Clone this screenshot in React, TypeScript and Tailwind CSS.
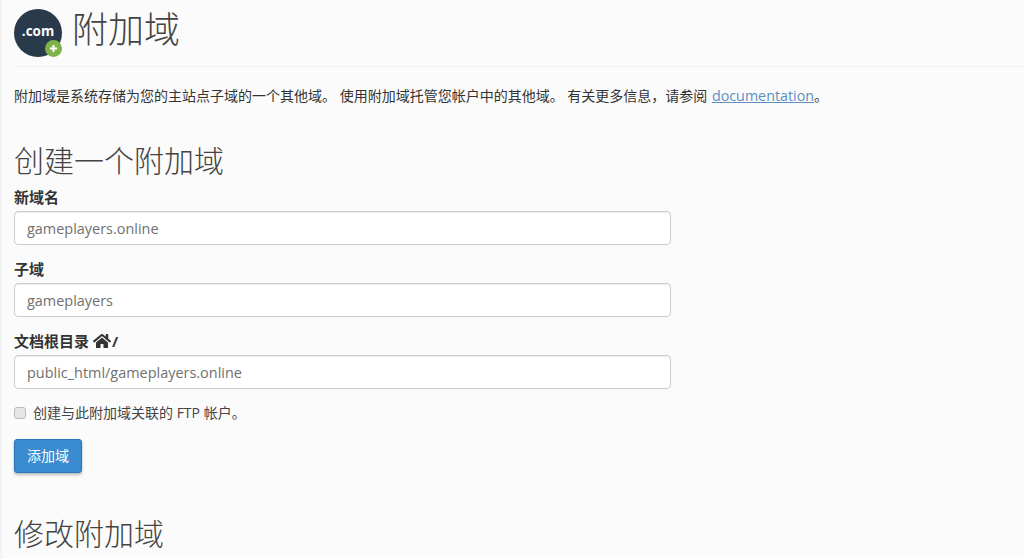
import { FaHome } from "react-icons/fa";

const font = { fontFamily: '"Open Sans", "Noto Sans CJK SC", sans-serif' };

function Field({ label, value, home }: { label: string; value: string; home?: boolean }) {
  return (
    <div className="mb-[12px]">
      <label className="flex h-[26px] items-start text-[15px] leading-[24px] font-bold text-[#333]">
        {label}
        {home && (
          <>
            <FaHome className="ml-[4px] mt-[4px] h-[16px] w-[18px] text-[#333]" />
            <span className="ml-[1px]">/</span>
          </>
        )}
      </label>
      <input
        readOnly
        value={value}
        className="block h-[34px] w-[657px] rounded border border-[#ccc] bg-white px-3 text-[14.45px] text-[#707070] shadow-[inset_0_1px_1px_rgba(0,0,0,0.075)]"
      />
    </div>
  );
}

export default function App() {
  return (
    <div style={font} className="h-[559px] overflow-hidden border-l-2 border-[#f3f3f3] bg-[#fbfbfb] pl-[12px] text-sm text-[#333]">
      <div className="flex h-[67px] items-start border-b border-[#f0f0f0]">
        <div className="relative mt-[9px] h-[48px] w-[48px] shrink-0">
          <div className="flex h-[48px] w-[48px] items-center justify-center rounded-full bg-[#293a4a] pb-[3px] text-[13.5px] font-bold text-white">
            .com
          </div>
          <div className="absolute bottom-0 right-0 flex h-[17px] w-[17px] items-center justify-center rounded-full bg-[#7fb347] text-white">
            <svg viewBox="0 0 10 10" className="h-[9px] w-[9px]">
              <path d="M5 1v8M1 5h8" stroke="currentColor" strokeWidth="2.2" />
            </svg>
          </div>
        </div>
        <h1 className="ml-[10px] mt-[6px] text-[36px] leading-[48px] font-light text-[#444]">附加域</h1>
      </div>

      <p className="mt-[19px] h-[20px] leading-[20px]">
        附加域是系统存储为您的主站点子域的一个其他域。 使用附加域托管您帐户中的其他域。 有关更多信息，请参阅{" "}
        <a href="#" className="ml-[1px] text-[14.3px] text-[#5b8fc0] underline">documentation</a>。
      </p>

      <h2 className="mt-[37px] text-[30px] leading-[36px] font-light text-[#444]">创建一个附加域</h2>

      <div className="mt-[6px]">
        <Field label="新域名" value="gameplayers.online" />
        <Field label="子域" value="gameplayers" />
        <Field label="文档根目录" value="public_html/gameplayers.online" home />
      </div>

      <label className="mt-[14px] flex h-[20px] items-center">
        <input type="checkbox" className="m-0 h-[12px] w-[12px] appearance-none rounded-[3px] border border-[#bbb] bg-[#e6e6e6]" />
        <span className="ml-[7px] text-[#444]">创建与此附加域关联的 FTP 帐户。</span>
      </label>

      <button className="mt-[16px] block h-[34px] w-[68px] rounded-[3px] border border-[#2a75b5] bg-[#3a8bd0] text-sm text-white shadow-[0_2px_3px_rgba(0,0,0,0.25)]">
        添加域
      </button>

      <h2 className="mt-[43px] text-[30px] leading-[36px] font-light text-[#444]">修改附加域</h2>
    </div>
  );
}
